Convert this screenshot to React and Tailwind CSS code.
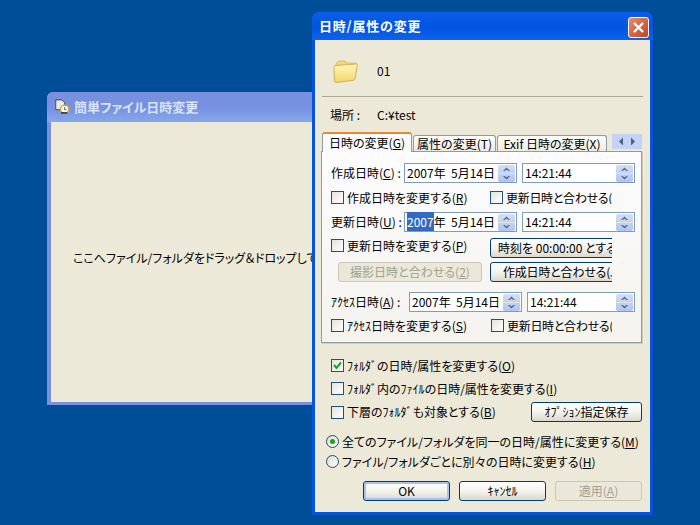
import React from "react";

const FONT = "[font-family:'Noto_Sans_CJK_JP','Liberation_Sans',sans-serif]";

function Spin() {
  return (
    <div className="w-[17px] h-[17px] my-auto mr-[1px] flex flex-col bg-gradient-to-b from-[#d3def8] to-[#b0c4f3] rounded-[2px] shrink-0">
      <svg viewBox="0 0 17 8" className="w-[17px] h-[8px]"><path d="M5 6 L8.5 2.5 L12 6 L10.5 6 L8.5 4.5 L6.5 6Z" fill="#4d6185" /></svg>
      <div className="h-[1px] bg-[#e8e6c8]" />
      <svg viewBox="0 0 17 8" className="w-[17px] h-[8px]"><path d="M5 2 L8.5 5.5 L12 2 L10.5 2 L8.5 3.5 L6.5 2Z" fill="#4d6185" /></svg>
    </div>
  );
}

function Field({ width, children }) {
  return (
    <div className={`${width} h-[20px] flex items-center bg-white border border-[#7f9db9] pl-[2px] shrink-0`}>
      <span className="flex-1 whitespace-pre text-[12px] leading-none">{children}</span>
      <Spin />
    </div>
  );
}

function Check({ checked, className = "", children }) {
  return (
    <label className={`flex items-center gap-[2px] whitespace-nowrap text-[12px] leading-none ${className}`}>
      <span className="w-[13px] h-[13px] border border-[#1c5180] bg-gradient-to-br from-[#e4e3dc] to-white flex items-center justify-center shrink-0">
        {checked && (
          <svg viewBox="0 0 11 11" className="w-[11px] h-[11px]"><path d="M2 5 L4.5 8 L9 2.5" fill="none" stroke="#21a121" strokeWidth="2" /></svg>
        )}
      </span>
      <span className="ml-[1px]">{children}</span>
    </label>
  );
}

function Radio({ checked, children }) {
  return (
    <label className="flex items-center gap-[3px] whitespace-nowrap text-[12px] leading-none">
      <span className="w-[13px] h-[13px] rounded-full border border-[#1c5180] bg-gradient-to-br from-[#dcdcd4] to-white flex items-center justify-center shrink-0">
        {checked && <span className="w-[5px] h-[5px] rounded-full bg-[#21a121]" />}
      </span>
      <span>{children}</span>
    </label>
  );
}

function Btn({ width, disabled, def, className = "", children }) {
  const look = disabled
    ? "border-[#c9c7ba] text-[#a1a192] bg-[#ebe8d9]"
    : "border-[#003c74] text-black bg-gradient-to-b from-white via-[#f4f3ee] to-[#dcd8ca]";
  return (
    <div className={`${width} h-[20px] shrink-0 border rounded-[3px] flex items-center justify-center whitespace-nowrap text-[12px] leading-none ${look} ${def ? "shadow-[inset_0_0_0_2px_#a9c4ec]" : ""} ${className}`}>
      {children}
    </div>
  );
}

function Tab({ active, width, children }) {
  return active ? (
    <div className={`${width} h-[20px] -mb-[1px] relative z-10 bg-[#fcfcfe] border-x border-[#919b9c] border-t-[2px] border-t-[#e68b2c] rounded-t-[3px] flex items-center justify-center whitespace-nowrap text-[12px] leading-none`}>
      {children}
    </div>
  ) : (
    <div className={`${width} h-[16px] bg-gradient-to-b from-white to-[#ecebe5] border-x border-t border-[#919b9c] rounded-t-[3px] flex items-center justify-center whitespace-nowrap text-[12px] leading-none overflow-hidden`}>
      {children}
    </div>
  );
}

function Folder() {
  return (
    <svg viewBox="0 0 28 26" className="w-[28px] h-[26px]">
      <path d="M5 6 Q6 3 9 3 L13 3 Q15 3 15 5 L24 5 Q26 5 25.5 7 L5 9Z" fill="#f5d979" stroke="#d9ae45" strokeWidth="0.7" />
      <path d="M3 9 Q3 7.5 5 7.5 L25.5 6 Q26.6 6 26.2 8 L24 21 Q23.7 22 22.5 22.2 L6 24.5 Q3.5 24.8 3.4 22.5Z" fill="url(#fg)" stroke="#c99a2e" strokeWidth="0.7" />
      <defs>
        <linearGradient id="fg" x1="0" y1="0" x2="0" y2="1">
          <stop offset="0" stopColor="#fff6bd" />
          <stop offset="1" stopColor="#f4d468" />
        </linearGradient>
      </defs>
    </svg>
  );
}

function AppIcon() {
  return (
    <svg viewBox="0 0 18 18" className="w-[18px] h-[16px] shrink-0">
      <path d="M2 1 H9 L12 4 V12 H2Z" fill="#e8e8e8" stroke="#222" strokeWidth="0.8" />
      <circle cx="12" cy="11.5" r="4.6" fill="#fff" stroke="#d9a520" strokeWidth="1.6" />
      <path d="M12 9 V12 H14" fill="none" stroke="#222" strokeWidth="0.8" />
      <path d="M8 15.6 H15" stroke="#111" strokeWidth="1.2" />
    </svg>
  );
}

export default function App() {
  return (
    <div className={`relative w-[700px] h-[525px] overflow-hidden bg-[#004e98] text-black ${FONT}`}>
      {/* background (inactive) window */}
      <div className="absolute left-[47px] top-[92px] w-[270px] h-[313px] flex flex-col rounded-t-[6px] bg-[#7b8fdc] overflow-hidden">
        <div className="h-[30px] shrink-0 flex items-center pl-[6px] gap-[3px] bg-gradient-to-b from-[#7a92de] via-[#7590e0] to-[#87a8ea]">
          <AppIcon />
          <span className="text-[13px] font-bold text-[#d8e4fa] [font-feature-settings:'palt'] whitespace-nowrap">簡単ファイル日時変更</span>
        </div>
        <div className="flex-1 mx-[4px] mb-[3px] bg-[#ece9d8] pl-[22px] pt-[128px] text-[12px] leading-[16px] whitespace-nowrap overflow-hidden [font-feature-settings:'palt']">
          ここへファイル/フォルダをドラッグ＆ドロップしてください
        </div>
      </div>

      {/* dialog */}
      <div className="absolute left-[312px] top-[12px] w-[341px] h-[503px] flex flex-col rounded-t-[7px] bg-[#0855dd] shadow-[1px_0_0_#0831a0] px-[3px] pb-[3px] [font-feature-settings:'palt']">
        <div className="h-[28px] shrink-0 flex items-center justify-between -mx-[3px] pl-[7px] pr-[4px] rounded-t-[7px] bg-gradient-to-b from-[#0a5fe8] via-[#0354e0] to-[#0a63ee]">
          <span className="text-[13px] font-bold text-white tracking-[0.8px] whitespace-nowrap">日時/属性の変更</span>
          <div className="w-[21px] h-[21px] mt-[3px] rounded-[3px] border border-white bg-gradient-to-br from-[#e68a6a] to-[#c6401c] flex items-center justify-center">
            <svg viewBox="0 0 13 13" className="w-[13px] h-[13px]"><path d="M2 2 L11 11 M11 2 L2 11" stroke="#fff" strokeWidth="2.4" /></svg>
          </div>
        </div>

        <div className="flex-1 bg-[#ece9d8] flex flex-col pl-[6px]">
          {/* header */}
          <div className="h-[56px] pt-[6px] flex items-center shrink-0">
            <div className="w-[56px] pl-[10px] flex"><Folder /></div>
            <span className="text-[12px] leading-none">01</span>
          </div>
          <div className="h-[1px] w-[321px] ml-[1px] bg-[#aca899] shrink-0" />
          <div className="h-[35px] flex items-center shrink-0 text-[12px] leading-none">
            <span className="w-[56px] pl-[9px]">場所 :</span>
            <span>C:¥test</span>
          </div>

          {/* tabs */}
          <div className="flex items-end h-[19px] shrink-0 ml-[1px] gap-[1px] relative">
            <Tab active width="w-[90px]">日時の変更(<u>G</u>)</Tab>
            <Tab width="w-[83px]">属性の変更(T)</Tab>
            <Tab width="w-[110px]">Exif 日時の変更(X)</Tab>
            <div className="ml-[4px] mb-[2px] w-[30px] h-[15px] bg-[#c4d2f6] flex items-center justify-around px-[3px]">
              <svg viewBox="0 0 6 9" className="w-[6px] h-[9px]"><path d="M5 0.5 L1 4.5 L5 8.5Z" fill="#4d6185" /></svg>
              <svg viewBox="0 0 6 9" className="w-[6px] h-[9px]"><path d="M1 0.5 L5 4.5 L1 8.5Z" fill="#4d6185" /></svg>
            </div>
          </div>

          {/* panel */}
          <div className="w-[321px] h-[192px] shrink-0 bg-gradient-to-b from-[#fcfcfe] to-[#f4f3ee] border border-[#919b9c] shadow-[1px_1px_0_#d0cdbb] pl-[9px] pt-[11px] flex flex-col">
            <div className="flex items-center h-[20px]">
              <span className="w-[73px] text-[12px] leading-none whitespace-nowrap">作成日時(<u>C</u>) :</span>
              <Field width="w-[113px]">2007年  5月14日</Field>
              <div className="w-[5px]" />
              <Field width="w-[113px]">14:21:44</Field>
            </div>
            <div className="flex items-center h-[13px] mt-[8px]">
              <Check className="w-[159px]">作成日時を変更する(<u>R</u>)</Check>
              <div className="w-[122px] overflow-hidden tracking-[-0.3px]"><Check>更新日時と合わせる(Y)</Check></div>
            </div>
            <div className="flex items-center h-[20px] mt-[8px]">
              <span className="w-[73px] text-[12px] leading-none whitespace-nowrap">更新日時(<u>U</u>) :</span>
              <div className="w-[113px] h-[20px] flex items-center bg-white border border-[#7f9db9] pl-[2px] shrink-0">
                <span className="flex-1 whitespace-pre text-[12px] leading-none"><span className="bg-[#316ac5] text-white py-[1px]">2007</span>年  5月14日</span>
                <Spin />
              </div>
              <div className="w-[5px]" />
              <Field width="w-[113px]">14:21:44</Field>
            </div>
            <div className="flex items-start h-[20px] mt-[6px]">
              <Check className="w-[159px] mt-[1px]">更新日時を変更する(<u>P</u>)</Check>
              <div className="w-[122px] overflow-hidden"><Btn width="w-[132px]" className="justify-start pl-[7px]">時刻を 00:00:00 とする(Z)</Btn></div>
            </div>
            <div className="flex items-center h-[20px] mt-[4px]">
              <Btn disabled width="w-[144px]" className="ml-[7px]">撮影日時と合わせる(<u>2</u>)</Btn>
              <div className="w-[8px]" />
              <div className="w-[122px] overflow-hidden tracking-[-0.2px]"><Btn width="w-[132px]" className="justify-start pl-[12px]">作成日時と合わせる(J)</Btn></div>
            </div>
            <div className="flex items-center h-[20px] mt-[10px]">
              <span className="w-[78px] text-[12px] leading-none whitespace-nowrap">ｱｸｾｽ日時(<u>A</u>) :</span>
              <Field width="w-[113px]">2007年  5月14日</Field>
              <div className="w-[5px]" />
              <Field width="w-[108px]">14:21:44</Field>
            </div>
            <div className="flex items-center h-[13px] mt-[7px]">
              <Check className="w-[160px]">ｱｸｾｽ日時を変更する(<u>S</u>)</Check>
              <div className="w-[121px] overflow-hidden tracking-[-0.3px]"><Check>更新日時と合わせる(Y)</Check></div>
            </div>
          </div>

          {/* options */}
          <div className="flex flex-col pl-[10px] mt-[16px]">
            <Check checked>ﾌｫﾙﾀﾞの日時/属性を変更する(<u>O</u>)</Check>
            <Check className="mt-[10px]">ﾌｫﾙﾀﾞ内のﾌｧｲﾙの日時/属性を変更する(<u>I</u>)</Check>
            <div className="flex items-center justify-between h-[20px] mt-[7px] w-[311px]">
              <Check>下層のﾌｫﾙﾀﾞも対象とする(<u>B</u>)</Check>
              <Btn width="w-[111px]">ｵﾌﾟｼｮﾝ指定保存</Btn>
            </div>
          </div>
          <div className="flex flex-col pl-[5px] mt-[13px] gap-[7px]">
            <Radio checked>全てのファイル/フォルダを同一の日時/属性に変更する(<u>M</u>)</Radio>
            <Radio>ファイル/フォルダごとに別々の日時に変更する(<u>H</u>)</Radio>
          </div>
          <div className="flex items-center mt-[13px] pl-[42px]">
            <Btn def width="w-[87px]">OK</Btn>
            <div className="w-[9px]" />
            <Btn width="w-[87px]">ｷｬﾝｾﾙ</Btn>
            <div className="w-[9px]" />
            <Btn disabled width="w-[87px]">適用(<u>A</u>)</Btn>
          </div>
        </div>
      </div>
    </div>
  );
}
